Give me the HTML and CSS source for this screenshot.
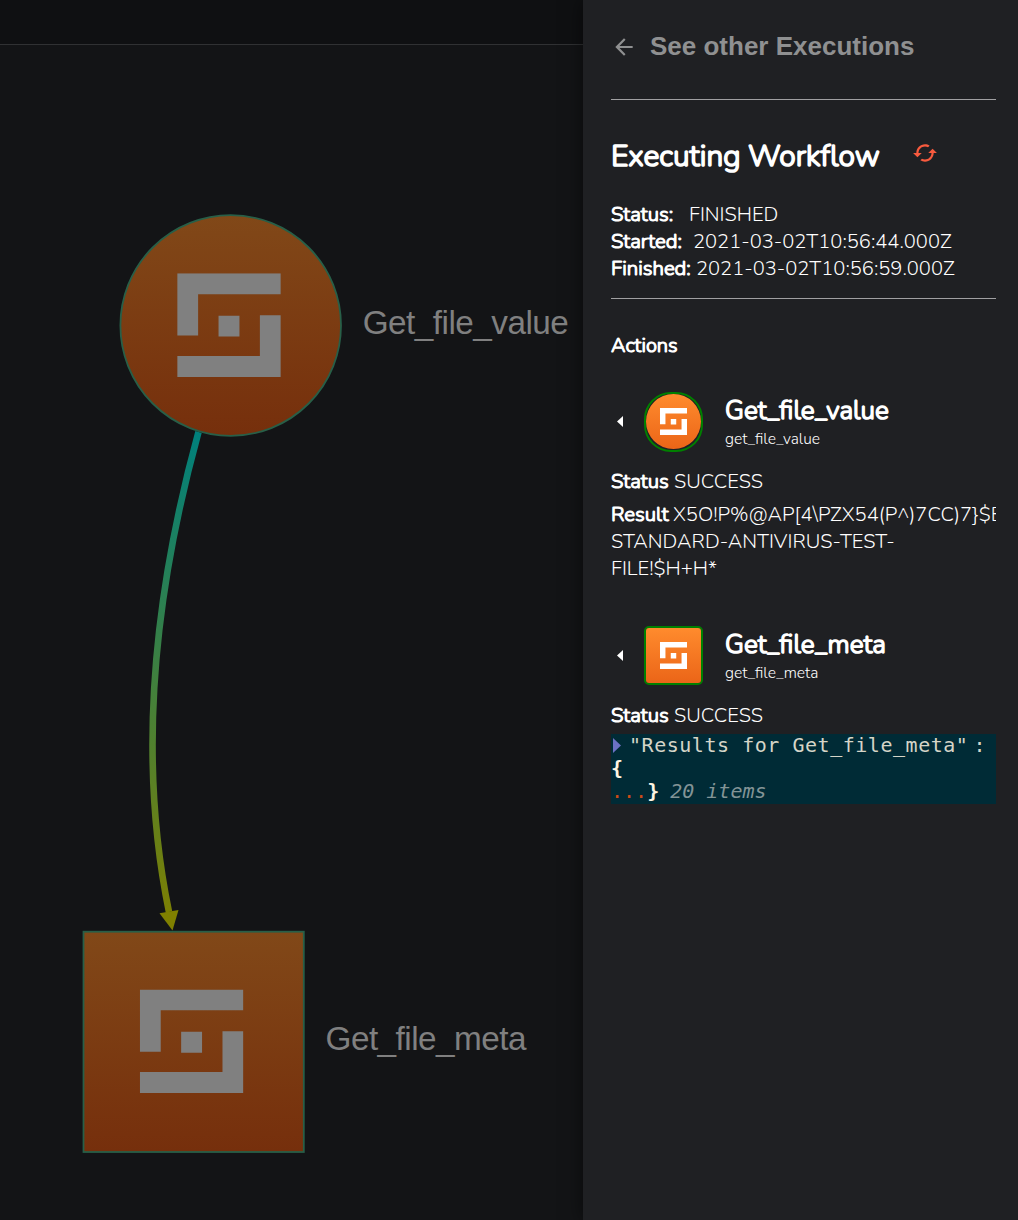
FILE: index.html
```html
<!DOCTYPE html>
<html lang="en">
<head>
<meta charset="utf-8">
<title>Workflow execution</title>
<link rel="stylesheet" href="styles.css">
</head>
<body>
<svg class="defs" width="0" height="0" aria-hidden="true">
  <symbol id="mark" viewBox="0 0 104 104"><path d="M0 0H104V21H21V62.500H0ZM104 104H0V83H83V42H104ZM41.500 42.500h21v21h-21Z" fill="currentColor"/></symbol>
</svg>
<div class="app">
  <main class="workspace">
    <div class="topbar"></div>
    <svg class="graph" viewBox="0 45 583 1175" width="583" height="1175">
      <defs>
        <linearGradient id="node" x1="0" y1="0" x2="0" y2="1"><stop offset="0" stop-color="#814818"/><stop offset="1" stop-color="#762f0c"/></linearGradient>
        <linearGradient id="edge" gradientUnits="userSpaceOnUse" x1="198" y1="432" x2="172" y2="930"><stop offset="0" stop-color="#00807c"/><stop offset="1" stop-color="#808000"/></linearGradient>
      </defs>
      <path d="M198.500 432Q125 699 169 912" fill="none" stroke="url(#edge)" stroke-width="6.600"/>
      <path d="M159.500 913.300L178.500 910L172.500 930.500Z" fill="#808000"/>
      <circle cx="230.700" cy="325.500" r="110.300" fill="url(#node)" stroke="#285f48" stroke-width="1.800"/>
      <rect x="83.500" y="931.700" width="220.300" height="220.300" fill="url(#node)" stroke="#285f48" stroke-width="1.800"/>
      <use href="#mark" class="graph-mark" x="177.200" y="273.300" width="103.600" height="103.600"/>
      <use href="#mark" class="graph-mark" x="139.800" y="989.400" width="103.600" height="103.600"/>
      <text class="graph-label" x="362.700" y="334">Get_file_value</text>
      <text class="graph-label" x="325.500" y="1050">Get_file_meta</text>
    </svg>
  </main>
  <aside class="drawer">
    <header class="back">
      <svg width="26" height="26" viewBox="0 0 24 24" fill="currentColor"><path d="M20 11H7.830l5.590-5.590L12 4l-8 8 8 8 1.410-1.410L7.830 13H20v-2z"/></svg>
      <span>See other Executions</span>
    </header>
    <section class="summary">
      <div class="title-row">
        <h2>Executing Workflow</h2>
        <svg width="26" height="26" viewBox="0 0 24 24" fill="currentColor"><path d="m19 8-4 4h3c0 3.310-2.690 6-6 6-1.010 0-1.970-.25-2.800-.7l-1.460 1.460C8.970 19.540 10.430 20 12 20c4.420 0 8-3.580 8-8h3l-4-4zM6 12c0-3.310 2.690-6 6-6 1.010 0 1.970.25 2.800.7l1.460-1.460C15.030 4.460 13.570 4 12 4c-4.420 0-8 3.580-8 8H1l4 4 4-4H6z"/></svg>
      </div>
      <div class="fact"><b class="status-key">Status:</b><span>FINISHED</span></div>
      <div class="fact"><b class="started-key">Started:</b><span>2021-03-02T10:56:44.000Z</span></div>
      <div class="fact"><b class="finished-key">Finished:</b><span>2021-03-02T10:56:59.000Z</span></div>
    </section>
    <h3 class="actions-title">Actions</h3>
    <article class="action">
      <div class="action-head">
        <i class="caret"></i>
        <div class="app-icon round"><div class="face"><svg width="27" height="27"><use href="#mark"/></svg></div></div>
        <div class="names"><h4>Get_file_value</h4><small>get_file_value</small></div>
      </div>
      <div class="action-status"><b>Status</b><span>SUCCESS</span></div>
      <div class="result">
        <div class="result-line"><b>Result</b><span>X5O!P%@AP[4\PZX54(P^)7CC)7}$EICAR-</span></div>
        <div>STANDARD-ANTIVIRUS-TEST-</div>
        <div>FILE!$H+H*</div>
      </div>
    </article>
    <article class="action">
      <div class="action-head">
        <i class="caret"></i>
        <div class="app-icon"><div class="face"><svg width="27" height="27"><use href="#mark"/></svg></div></div>
        <div class="names"><h4>Get_file_meta</h4><small>get_file_meta</small></div>
      </div>
      <div class="action-status"><b>Status</b><span>SUCCESS</span></div>
      <div class="json">
        <div class="json-key"><i class="toggle"></i><span class="key-text">"Results for Get_file_meta"</span><span class="colon">:</span></div>
        <div class="brace">{</div>
        <div><span class="dots">...</span><span class="brace">}</span><em>20 items</em></div>
      </div>
    </article>
  </aside>
</div>
</body>
</html>
```
FILE: styles.css
```css
* { box-sizing: border-box; }
body { margin: 0; background: #131416; color: #fff; font: 300 20.100px/27px Nunito, Lato, sans-serif; }
h2, h3, h4 { margin: 0; }
h2, h3, h4, b { font-weight: 300; -webkit-text-stroke: 1.150px currentColor; }
b { font-size: 20.400px; }
svg { display: block; flex: none; }
.defs { position: absolute; }
.app { display: flex; height: 1220px; overflow: hidden; }
.workspace { flex: 1; min-width: 0; }
.topbar { height: 45px; background: #0f1012; border-bottom: 1px solid #303133; }
.graph-mark { color: #808080; }
.graph-label { font: 33.300px "Liberation Sans", Arial, sans-serif; letter-spacing: -.52px; fill: #808080; }
.drawer { width: 435px; padding: 0 22px 0 28px; background: #1f2023; box-shadow: 0 0 18px rgba(0, 0, 0, .55); white-space: nowrap; }
.back { display: flex; align-items: center; gap: 13px; height: 100px; padding-bottom: 7px; border-bottom: 1px solid #a0a0a2; color: #8f9091; font: bold 26px/30px "Liberation Sans", Arial, sans-serif; }
.back svg { margin-top: 1px; }
.summary { height: 199px; border-bottom: 1px solid #a0a0a2; padding-top: 36px; }
.title-row { display: flex; align-items: flex-start; height: 65px; }
.title-row h2 { width: 301px; font-size: 30px; line-height: 41px; -webkit-text-stroke-width: 1.700px; }
.title-row svg { margin-top: 4px; color: #f85a3e; }
.fact { display: flex; height: 27px; }
.status-key { width: 78px; }
.started-key { width: 82px; }
.finished-key { width: 85px; }
.actions-title { margin-top: 33px; font-size: 20.100px; }
.action { height: 201px; margin-top: 33px; }
.action-head { display: flex; height: 60px; }
.caret { margin: 24px 21px 0 6px; width: 6px; height: 11px; background: #fff; clip-path: polygon(100% 0, 100% 100%, 0 50%); }
.app-icon { width: 59px; height: 59px; margin-right: 22px; border: 2px solid #008000; border-radius: 5px; }
.face { width: 55px; height: 55px; border-radius: 3px; background: linear-gradient(#ff8b2d, #eb6518); display: grid; place-items: center; }
.app-icon.round { border-radius: 27px; height: 60px; }
.round .face { border-radius: 50%; }
.names h4 { font-size: 26.200px; line-height: 38px; -webkit-text-stroke-width: 1.500px; }
.names small { display: block; margin-top: -2px; font-size: 15.550px; line-height: 22px; }
.action-status { display: flex; margin-top: 16px; }
.action-status b { flex: none; width: 63px; }
.result { margin-top: 6px; overflow: hidden; }
.result-line { display: flex; }
.result-line b { flex: none; width: 62px; }
.json { margin-top: 5px; height: 70px; background: #002b36; font: 20px/23px "DejaVu Sans Mono", monospace; color: #d5d5c8; overflow: hidden; }
.json-key { display: flex; }
.toggle { width: 8px; height: 15px; margin: 4px 8px 0 2px; background: #6c71c4; clip-path: polygon(0 0, 100% 50%, 0 100%); }
.key-text { letter-spacing: .53px; }
.colon { margin-left: 5px; }
.brace { font-weight: bold; color: #fdf6e3; }
.dots { color: #cb4b16; }
.json em { margin-left: 11px; color: #839496; }
```
